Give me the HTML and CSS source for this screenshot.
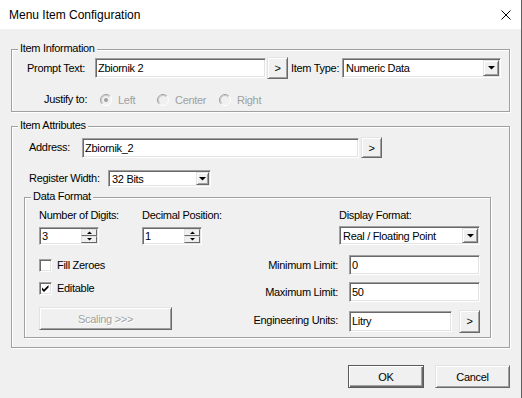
FILE: index.html
```html
<!DOCTYPE html>
<html>
<head>
<meta charset="utf-8">
<title>Menu Item Configuration</title>
<link rel="stylesheet" href="styles.css">
</head>
<body>
<div class="window">
  <div class="titlebar">
    <span class="title">Menu Item Configuration</span>
    <svg class="close" width="10" height="10" viewBox="0 0 10 10"><path d="M0.5 0.5 L9.5 9.5 M9.5 0.5 L0.5 9.5" stroke="#000" stroke-width="1" fill="none"/></svg>
  </div>
  <div class="client">
    <div class="group g-info">
      <span class="caption">Item Information</span>
      <div class="row r-prompt">
        <span class="lbl w-prompt">Prompt Text:</span>
        <div class="edit e-prompt">Zbiornik 2</div>
        <div class="btn btn-more">&gt;</div>
        <span class="lbl w-type">Item Type:</span>
        <div class="combo c-type">
          <span class="combo-text">Numeric Data</span>
          <span class="drop"><svg width="7" height="4" viewBox="0 0 7 4"><path d="M0 0H7L3.5 3.6Z" fill="#000"/></svg></span>
        </div>
      </div>
      <div class="row r-justify">
        <span class="lbl w-justify">Justify to:</span>
        <span class="radio rd-left">
          <svg width="12" height="12" viewBox="0 0 12 12"><circle cx="6" cy="6" r="5.5" fill="#f0f0f0"/><path d="M2.1 9.9A5.5 5.5 0 0 1 9.9 2.1" stroke="#a0a0a0" fill="none"/><path d="M9.9 2.1A5.5 5.5 0 0 1 2.1 9.9" stroke="#fff" fill="none"/><path d="M2.8 9.2A4.5 4.5 0 0 1 9.2 2.8" stroke="#c4c4c4" fill="none"/><circle cx="6" cy="6" r="2" fill="#a0a0a0"/></svg>
          <span class="dis">Left</span>
        </span>
        <span class="radio rd-center">
          <svg width="12" height="12" viewBox="0 0 12 12"><circle cx="6" cy="6" r="5.5" fill="#f0f0f0"/><path d="M2.1 9.9A5.5 5.5 0 0 1 9.9 2.1" stroke="#a0a0a0" fill="none"/><path d="M9.9 2.1A5.5 5.5 0 0 1 2.1 9.9" stroke="#fff" fill="none"/><path d="M2.8 9.2A4.5 4.5 0 0 1 9.2 2.8" stroke="#c4c4c4" fill="none"/></svg>
          <span class="dis">Center</span>
        </span>
        <span class="radio rd-right">
          <svg width="12" height="12" viewBox="0 0 12 12"><circle cx="6" cy="6" r="5.5" fill="#f0f0f0"/><path d="M2.1 9.9A5.5 5.5 0 0 1 9.9 2.1" stroke="#a0a0a0" fill="none"/><path d="M9.9 2.1A5.5 5.5 0 0 1 2.1 9.9" stroke="#fff" fill="none"/><path d="M2.8 9.2A4.5 4.5 0 0 1 9.2 2.8" stroke="#c4c4c4" fill="none"/></svg>
          <span class="dis">Right</span>
        </span>
      </div>
    </div>

    <div class="group g-attr">
      <span class="caption">Item Attributes</span>
      <div class="row attr-row r-address">
        <span class="lbl w-address">Address:</span>
        <div class="edit e-address">Zbiornik_2</div>
        <div class="btn btn-more btn-addr">&gt;</div>
      </div>
      <div class="row attr-row r-register">
        <span class="lbl w-register">Register Width:</span>
        <div class="combo c-register">
          <span class="combo-text">32 Bits</span>
          <span class="drop drop-small"><svg width="7" height="4" viewBox="0 0 7 4"><path d="M0 0H7L3.5 3.6Z" fill="#000"/></svg></span>
        </div>
      </div>

      <div class="group g-format">
        <span class="caption">Data Format</span>
        <div class="df-top">
          <div class="col col-a">
            <div class="col-lbl">Number of Digits:</div>
            <div class="spin">
              <span class="spin-text">3</span>
              <span class="spin-btns">
                <span class="spin-btn"><svg width="5" height="3" viewBox="0 0 5 3"><path d="M0 3H5L2.5 0.5Z" fill="#000"/></svg></span>
                <span class="spin-btn"><svg width="5" height="3" viewBox="0 0 5 3"><path d="M0 0H5L2.5 2.5Z" fill="#000"/></svg></span>
              </span>
            </div>
          </div>
          <div class="col col-b">
            <div class="col-lbl">Decimal Position:</div>
            <div class="spin">
              <span class="spin-text">1</span>
              <span class="spin-btns">
                <span class="spin-btn"><svg width="5" height="3" viewBox="0 0 5 3"><path d="M0 3H5L2.5 0.5Z" fill="#000"/></svg></span>
                <span class="spin-btn"><svg width="5" height="3" viewBox="0 0 5 3"><path d="M0 0H5L2.5 2.5Z" fill="#000"/></svg></span>
              </span>
            </div>
          </div>
          <div class="col col-c">
            <div class="col-lbl lbl-c">Display Format:</div>
            <div class="combo c-display">
              <span class="combo-text">Real / Floating Point</span>
              <span class="drop"><svg width="7" height="4" viewBox="0 0 7 4"><path d="M0 0H7L3.5 3.6Z" fill="#000"/></svg></span>
            </div>
          </div>
        </div>
        <div class="df-bottom">
          <div class="df-left">
            <div class="check-row">
              <span class="checkbox"></span>
              <span>Fill Zeroes</span>
            </div>
            <div class="check-row check-2">
              <span class="checkbox"><svg width="13" height="13" viewBox="0 0 13 13"><path d="M3 5.5L5 7.5L9.5 3V5.5L5 10L3 8Z" fill="#000"/></svg></span>
              <span>Editable</span>
            </div>
            <div class="btn btn-scaling">Scaling &gt;&gt;&gt;</div>
          </div>
          <div class="df-right">
            <span class="lbl-r">Minimum Limit:</span>
            <div class="edit e-limit">0</div>
            <span class="lbl-r">Maximum Limit:</span>
            <div class="edit e-limit">50</div>
            <span class="lbl-r">Engineering Units:</span>
            <div class="units">
              <div class="edit e-units">Litry</div>
              <div class="btn btn-more btn-units">&gt;</div>
            </div>
          </div>
        </div>
      </div>
    </div>

    <div class="footer">
      <div class="btn btn-ok">OK</div>
      <div class="btn btn-cancel">Cancel</div>
    </div>
  </div>
</div>
</body>
</html>
```

FILE: styles.css
```css
* { box-sizing: border-box; }
html, body { margin: 0; padding: 0; }
body {
  width: 522px;
  height: 398px;
  overflow: hidden;
  font-family: "Liberation Sans", Arial, sans-serif;
  font-size: 11px;
  letter-spacing: -0.3px;
  color: #000;
  background: #f0f0f0;
}
.window {
  width: 522px;
  height: 398px;
  border-right: 1px solid #5f5f5f;
  background: #f0f0f0;
  display: flex;
  flex-direction: column;
}
.titlebar {
  height: 29px;
  flex: none;
  background: #fff;
  display: flex;
  align-items: center;
  padding: 0 10px 0 9px;
}
.title { flex: 1; font-size: 12px; letter-spacing: 0; }
.close { display: block; }

.client { padding: 20px 11px 0 11px; }

.group {
  position: relative;
  border: 1px solid #a0a0a0;
  box-shadow: inset 1px 1px 0 #fff, 1px 1px 0 #fff;
}
.caption {
  position: absolute;
  top: -8px;
  left: 6px;
  padding: 0 2px;
  line-height: 13px;
  background: #f0f0f0;
}

.row { display: flex; align-items: center; }
.lbl { line-height: 13px; white-space: nowrap; flex: none; }

.edit {
  flex: none;
  height: 20px;
  background: #fff;
  border: 1px solid;
  border-color: #a0a0a0 #fff #fff #a0a0a0;
  box-shadow: inset 1px 1px 0 #696969, inset -1px -1px 0 #e3e3e3;
  padding: 0 2px;
  line-height: 18px;
  white-space: nowrap;
  overflow: hidden;
}

.btn {
  flex: none;
  display: flex;
  align-items: center;
  justify-content: center;
  background: #f0f0f0;
  border: 1px solid;
  border-color: #e3e3e3 #696969 #696969 #e3e3e3;
  box-shadow: inset 1px 1px 0 #fff, inset -1px -1px 0 #a0a0a0;
  white-space: nowrap;
}
.btn-more { width: 21px; height: 22px; }

.combo {
  flex: none;
  display: flex;
  align-items: stretch;
  background: #fff;
  border: 1px solid;
  border-color: #a0a0a0 #fff #fff #a0a0a0;
  box-shadow: inset 1px 1px 0 #696969, inset -1px -1px 0 #e3e3e3;
  padding: 1px;
}
.combo-text {
  flex: 1;
  padding-left: 2px;
  display: flex;
  align-items: center;
  white-space: nowrap;
}
.drop {
  width: 16px;
  flex: none;
  display: flex;
  align-items: center;
  justify-content: center;
  background: #f0f0f0;
  border: 1px solid;
  border-color: #e3e3e3 #696969 #696969 #e3e3e3;
  box-shadow: inset 1px 1px 0 #fff, inset -1px -1px 0 #a0a0a0;
}
.drop svg { display: block; }
.drop-small { width: 13px; }

/* Item Information */
.g-info { padding: 7px 0 5px 15px; }
.r-prompt { height: 22px; }
.w-prompt { width: 68px; }
.e-prompt { width: 171px; }
.r-prompt .btn-more { margin-left: 1px; }
.w-type { margin-left: 3px; width: 51px; }
.c-type { width: 159px; height: 20px; }

.r-justify { margin-top: 14px; height: 13px; }
.w-justify { margin-left: 17px; width: 56px; }
.radio { display: flex; align-items: center; gap: 6px; flex: none; }
.radio svg { display: block; flex: none; }
.rd-left { width: 57px; }
.rd-center { width: 62px; }
.dis { color: #a0a0a0; }

/* Item Attributes */
.g-attr { margin-top: 14px; padding: 10px 18px 9px 12px; }
.attr-row { padding-left: 5px; }
.r-address { height: 21px; }
.w-address { width: 53px; }
.e-address { width: 277px; }
.btn-addr { margin-left: 2px; height: 21px; }
.r-register { margin-top: 12px; height: 17px; }
.w-register { width: 79px; }
.c-register { width: 103px; height: 17px; }

/* Data Format */
.g-format { margin-top: 10px; height: 141px; padding: 11px 10px 5px 0; }
.df-top { display: flex; padding-left: 14px; }
.col { flex: none; }
.col-a { width: 103px; }
.col-b { width: 197px; }
.col-lbl { line-height: 13px; margin-bottom: 5px; white-space: nowrap; }
.col-lbl.lbl-c { margin-bottom: 4px; }
.c-display { width: 141px; height: 19px; }

.spin {
  width: 60px;
  height: 18px;
  display: flex;
  background: #fff;
  border: 1px solid;
  border-color: #a0a0a0 #fff #fff #a0a0a0;
  box-shadow: inset 1px 1px 0 #696969, inset -1px -1px 0 #e3e3e3;
  padding: 1px;
}
.spin-text { flex: 1; padding-left: 1px; line-height: 14px; }
.spin-btns { width: 16px; display: flex; flex-direction: column; }
.spin-btn {
  flex: 1;
  display: flex;
  align-items: center;
  justify-content: center;
  background: #f0f0f0;
  border: 1px solid;
  border-color: #e3e3e3 #696969 #696969 #e3e3e3;
}
.spin-btn svg { display: block; }

.df-bottom { display: flex; margin-top: 10px; }
.df-left { flex: 1; padding: 4px 0 0 14px; }
.check-row { display: flex; align-items: center; gap: 5px; height: 13px; line-height: 13px; }
.check-2 { margin-top: 10px; }
.checkbox {
  width: 13px;
  height: 13px;
  flex: none;
  background: #fff;
  border: 1px solid;
  border-color: #a0a0a0 #fff #fff #a0a0a0;
  box-shadow: inset 1px 1px 0 #696969, inset -1px -1px 0 #e3e3e3;
  position: relative;
}
.checkbox svg { position: absolute; left: -1px; top: -1px; display: block; }
.btn-scaling {
  margin-top: 12px;
  width: 133px;
  height: 23px;
  color: #a0a0a0;
  text-shadow: 1px 1px 0 #fff;
}

.df-right {
  display: grid;
  grid-template-columns: max-content 131px;
  grid-template-rows: 20px 20px 23px;
  column-gap: 11px;
  row-gap: 7px;
  align-items: center;
}
.lbl-r { text-align: right; white-space: nowrap; line-height: 13px; }
.e-limit { width: 131px; }
.units { display: flex; align-items: center; margin-top: 1px; }
.e-units { width: 103px; height: 21px; }
.btn-units { margin-left: 7px; height: 23px; }

.footer {
  display: flex;
  justify-content: flex-end;
  gap: 11px;
  margin-top: 17px;
}
.btn-ok {
  width: 76px;
  height: 23px;
  border: 1px solid #5a5a5a;
  box-shadow: inset 1px 1px 0 #fff, inset -1px -1px 0 #696969, inset -2px -2px 0 #a0a0a0;
}
.btn-cancel { width: 75px; height: 23px; }
```
